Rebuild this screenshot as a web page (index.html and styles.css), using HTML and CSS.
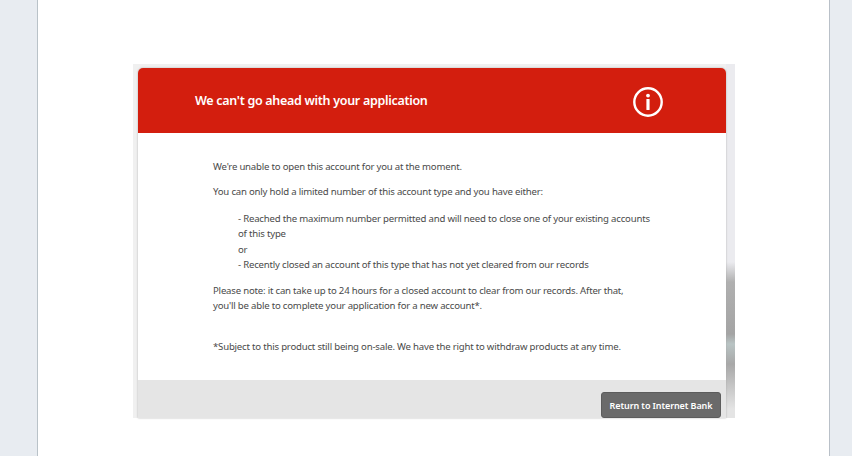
FILE: index.html
```html
<!DOCTYPE html>
<html lang="en">
<head>
<meta charset="utf-8">
<title>We can't go ahead with your application</title>
<link rel="stylesheet" href="styles.css">
</head>
<body>
<div class="page">
  <main class="sheet">
    <div class="frame">
      <section class="card">
        <header class="banner">
          <h1 class="title">We can't go ahead with your application</h1>
          <svg class="info" width="32" height="32" viewBox="0 0 32 32" aria-hidden="true">
            <circle cx="16" cy="16" r="13.7" fill="none" stroke="#fff" stroke-width="2.4"/>
            <circle cx="16" cy="9.6" r="1.9" fill="#fff"/>
            <rect x="14.4" y="13" width="3.2" height="11" rx="0.6" fill="#fff"/>
          </svg>
        </header>
        <div class="body">
          <p class="para">We're unable to open this account for you at the moment.</p>
          <p class="para gap-list">You can only hold a limited number of this account type and you have either:</p>
          <ul class="reasons">
            <li>- Reached the maximum number permitted and will need to close one of your existing accounts<br>of this type</li>
            <li>or</li>
            <li>- Recently closed an account of this type that has not yet cleared from our records</li>
          </ul>
          <p class="para note">Please note: it can take up to 24 hours for a closed account to clear from our records. After that,<br>you'll be able to complete your application for a new account*.</p>
          <p class="para small-print">*Subject to this product still being on-sale. We have the right to withdraw products at any time.</p>
        </div>
        <footer class="actions">
          <button class="return" type="button">Return to Internet Bank</button>
        </footer>
      </section>
    </div>
  </main>
</div>
</body>
</html>
```
FILE: styles.css
```css
* { box-sizing: border-box; }
html, body { margin: 0; height: 100%; }
body {
  background: #e8ecf1;
  font-family: "Noto Sans", "Open Sans", sans-serif;
  overflow: hidden;
}
.page { height: 456px; padding: 0 22px 0 37px; }
.sheet {
  height: 456px;
  background: #fff;
  border-left: 1px solid #b9c2c8;
  border-right: 1px solid #b9c0c8;
  padding: 64px 0 0 95px;
}
.frame {
  width: 602px;
  height: 354px;
  padding: 4px 9px 0 5px;
  background-color: #f0f0f0;
  background-image: linear-gradient(to bottom, #ebebef 0, #ebebef 198px, #b0b0b0 218px, #a4a4a4 270px, #b9c4c4 280px, #a8a8a8 300px, #e4e4e4 345px);
  background-repeat: no-repeat;
  background-position: right top;
  background-size: 9px 100%;
}
.card {
  height: 350px;
  background: #fff;
  border-radius: 5px 5px 0 0;
  box-shadow: 0 0 2px #a8a8a8;
  display: flex;
  flex-direction: column;
}
.banner {
  height: 65px;
  flex: none;
  background: #d31e0e;
  border-radius: 5px 5px 0 0;
  display: flex;
  align-items: center;
  justify-content: space-between;
  padding: 0 62px 0 57px;
}
.title {
  margin: 0;
  color: #fff;
  font-size: 12.5px;
  letter-spacing: -0.3px;
  line-height: 18px;
  font-weight: 600;
}
.info { display: block; margin-top: 2px; }
.body {
  flex: 1;
  min-height: 0;
  padding: 26px 40px 0 75px;
  color: #4a4a4a;
  font-size: 9.6px;
  letter-spacing: -0.2px;
  line-height: 15px;
}
.para { margin: 0 0 10px; }
.gap-list { margin-bottom: 12px; }
.reasons {
  list-style: none;
  margin: 0 0 11px;
  padding: 0 0 0 25px;
  line-height: 15.34px;
}
.note { margin-bottom: 26px; }
.small-print { margin: 0; }
.actions {
  height: 38px;
  flex: none;
  background: #e5e5e5;
  display: flex;
  justify-content: flex-end;
  align-items: flex-end;
  padding-right: 5px;
}
.return {
  width: 120px;
  height: 26px;
  border: 1px solid #5c5c5c;
  border-radius: 3px;
  background: #6a6a6a;
  color: #fff;
  font: 600 9px/1 "Noto Sans", "Open Sans", sans-serif;
  letter-spacing: -0.1px;
  padding: 0;
}
```
